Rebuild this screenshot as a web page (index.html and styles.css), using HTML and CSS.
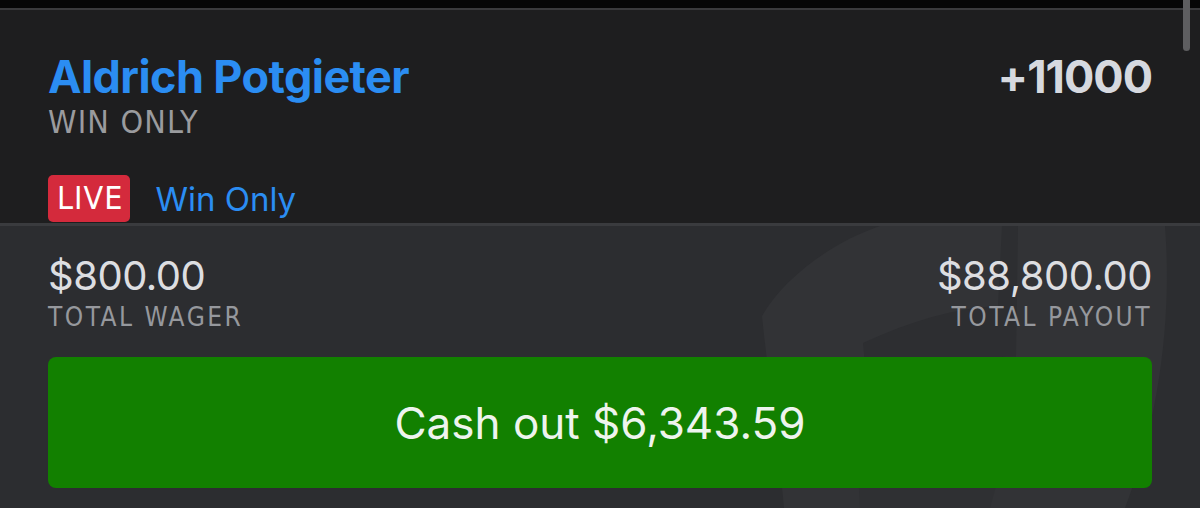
FILE: index.html
```html
<!DOCTYPE html>
<html>
<head>
<meta charset="utf-8">
<link rel="stylesheet" href="styles.css">
</head>
<body>
<div class="topbar"></div>
<div class="scroll-thumb"></div>
<section class="bet">
  <div class="bet-row">
    <div class="bet-info">
      <div class="name">Aldrich Potgieter</div>
      <div class="market">WIN ONLY</div>
    </div>
    <div class="odds">+11000</div>
  </div>
  <div class="status">
    <span class="live">LIVE</span>
    <span class="status-text">Win Only</span>
  </div>
</section>
<section class="summary">
  <svg class="watermark" viewBox="0 0 460 282" width="460" height="282">
    <path d="M22 90 C45 50 95 15 140 0 L425 0 C432 90 420 190 385 282 L44 282 C38 210 28 150 22 90 Z" fill="#323336"/>
    <path d="M123 117 C170 95 215 82 258 80 L262 0 L278 0 L276 130 C225 132 175 150 128 172 Z" fill="#2d2e31"/>
    <path d="M120 282 C118 240 115 200 128 172 C175 150 225 132 276 130 C275 190 262 240 250 282 Z" fill="#2f3033"/>
  </svg>
  <div class="totals">
    <div class="total">
      <div class="amount">$800.00</div>
      <div class="label">TOTAL WAGER</div>
    </div>
    <div class="total right">
      <div class="amount">$88,800.00</div>
      <div class="label">TOTAL PAYOUT</div>
    </div>
  </div>
  <button class="cashout">Cash out $6,343.59</button>
</section>
</body>
</html>
```
FILE: styles.css
```css
html, body {
  margin: 0;
  padding: 0;
}
body {
  width: 1200px;
  height: 508px;
  overflow: hidden;
  background: #1e1e1f;
  font-family: Inter, Lato, "Noto Sans", sans-serif;
  position: relative;
}
.topbar {
  height: 8px;
  background: #070707;
  border-bottom: 2px solid #3b3b3d;
}
.scroll-thumb {
  position: absolute;
  left: 1183px;
  top: 0;
  width: 7px;
  height: 51px;
  border-radius: 0 0 4px 4px;
  background: #5e5e60;
}
.bet {
  height: 213px;
  padding: 0 48px;
  box-sizing: border-box;
  display: flex;
  flex-direction: column;
}
.bet-row {
  display: flex;
  justify-content: space-between;
  align-items: flex-start;
  padding-top: 42px;
}
.name {
  color: #2b8df2;
  font-weight: 700;
  font-size: 45px;
  letter-spacing: -0.6px;
  line-height: 50px;
}
.market {
  color: #9a9b9e;
  font-family: "DejaVu Sans Condensed", "DejaVu Sans", sans-serif;
  font-stretch: condensed;
  font-size: 32px;
  letter-spacing: 1.2px;
  line-height: 36px;
  margin-top: 2px;
}
.odds {
  color: #d6d9df;
  font-weight: 700;
  font-size: 45px;
  letter-spacing: -1px;
  line-height: 50px;
}
.status {
  display: flex;
  align-items: center;
  gap: 25px;
  margin-top: 35px;
}
.live {
  background: #d42a3c;
  color: #ffffff;
  border-radius: 5px;
  font-family: "DejaVu Sans Condensed", "DejaVu Sans", sans-serif;
  font-stretch: condensed;
  font-size: 32px;
  letter-spacing: 1px;
  line-height: 47px;
  height: 47px;
  padding: 0 7px 0 9px;
}
.status-text {
  color: #2b8df2;
  font-size: 33px;
}
.summary {
  position: relative;
  height: 285px;
  background: #2c2d30;
  border-top: 3px solid #3a3b3e;
  padding: 0 48px;
  box-sizing: border-box;
  overflow: hidden;
}
.watermark {
  position: absolute;
  left: 740px;
  top: 0;
}
.totals {
  position: relative;
  display: flex;
  justify-content: space-between;
  padding-top: 28px;
}
.total.right {
  text-align: right;
}
.amount {
  color: #dddee1;
  font-size: 40px;
  letter-spacing: -0.5px;
  line-height: 44px;
}
.label {
  color: #96989d;
  font-family: "DejaVu Sans Condensed", "DejaVu Sans", sans-serif;
  font-stretch: condensed;
  font-size: 26px;
  letter-spacing: 2.5px;
  line-height: 32px;
  margin-top: 3px;
}
.cashout {
  position: relative;
  display: block;
  width: 100%;
  height: 131px;
  margin-top: 24px;
  border: none;
  border-radius: 8px;
  background: #128000;
  color: #eef4ee;
  font-family: Inter, Lato, "Noto Sans", sans-serif;
  font-size: 44px;
  padding: 0;
}
```
